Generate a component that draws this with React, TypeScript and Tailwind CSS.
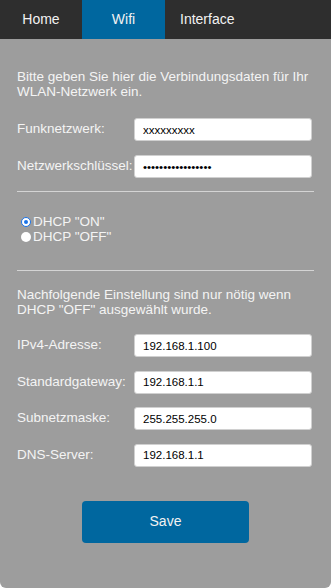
const font = { fontFamily: '"Liberation Sans", Arial, sans-serif' };

function Field({ label, value, type = "text" }: { label: string; value: string; type?: string }) {
  return (
    <div className="flex items-center">
      <label className="w-[117px] shrink-0 text-[13.5px] text-[#f4f4f4]">{label}</label>
      <input
        type={type}
        defaultValue={value}
        className="h-[23px] w-[178px] rounded-[3px] border border-[#d0d0d0] bg-white px-[8px] text-[11.5px] text-black outline-none"
        style={font}
      />
    </div>
  );
}

export default function App() {
  return (
    <div className="min-h-screen bg-white" style={font}>
      <div className="h-[588px] overflow-hidden rounded-b-[6px] bg-[#9d9d9d]">
        {/* Tabs */}
        <nav className="flex h-[39px] bg-[#2e2e2e] text-[14px] text-[#f2f2f2]">
          <div className="flex w-[82px] items-center justify-center">Home</div>
          <div className="flex w-[83px] items-center justify-center bg-[#00679f]">Wifi</div>
          <div className="flex items-center pl-[15px]">Interface</div>
        </nav>

        <div className="px-[17px]">
          <p className="mt-[30px] text-[13.5px] leading-[15px] text-[#f4f4f4]">
            Bitte geben Sie hier die Verbindungsdaten für Ihr WLAN-Netzwerk ein.
          </p>

          <div className="mt-[19px] flex flex-col gap-[14px]">
            <Field label="Funknetzwerk:" value="xxxxxxxxx" />
            <Field label="Netzwerkschlüssel:" value="•••••••••••••••••" />
          </div>

          <hr className="mt-[13px] border-t-[1.5px] border-[#d4d4d4]" />

          <div className="mt-[22px] flex flex-col text-[13.5px] leading-[15px] text-[#f4f4f4]">
            <label className="flex items-center gap-[2px] pl-[4px]">
              <span className="flex h-[10px] w-[10px] items-center justify-center rounded-full border-[1.5px] border-[#1a73e8] bg-white">
                <span className="h-[4px] w-[4px] rounded-full bg-[#1a73e8]" />
              </span>
              DHCP "ON"
            </label>
            <label className="flex items-center gap-[2px] pl-[4px]">
              <span className="h-[10px] w-[10px] rounded-full bg-white" />
              DHCP "OFF"
            </label>
          </div>

          <hr className="mt-[26px] border-t-[1.5px] border-[#d4d4d4]" />

          <p className="mt-[16px] text-[13.5px] leading-[15px] text-[#f4f4f4]">
            Nachfolgende Einstellung sind nur nötig wenn DHCP "OFF" ausgewählt wurde.
          </p>

          <div className="mt-[17px] flex flex-col gap-[13.5px]">
            <Field label="IPv4-Adresse:" value="192.168.1.100" />
            <Field label="Standardgateway:" value="192.168.1.1" />
            <Field label="Subnetzmaske:" value="255.255.255.0" />
            <Field label="DNS-Server:" value="192.168.1.1" />
          </div>

          <div className="mt-[34px] flex justify-center">
            <button className="h-[42px] w-[167px] rounded-[4px] bg-[#00679f] text-[14px] text-[#f2f2f2]">
              Save
            </button>
          </div>
        </div>
      </div>
    </div>
  );
}
